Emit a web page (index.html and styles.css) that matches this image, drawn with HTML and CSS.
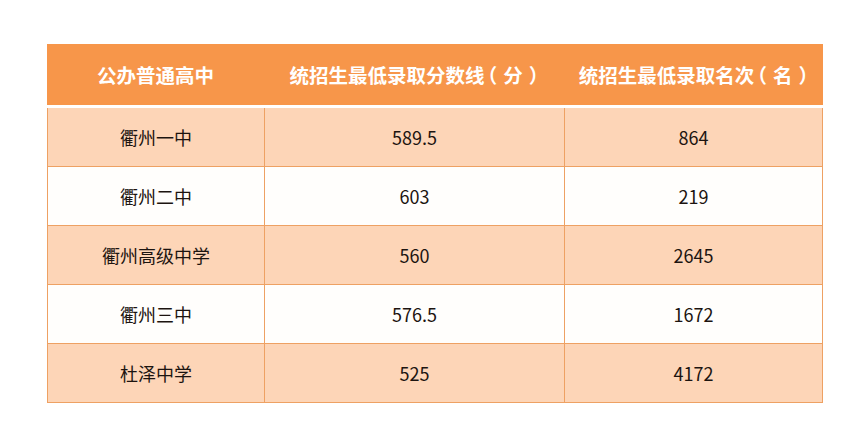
FILE: index.html
```html
<!DOCTYPE html>
<html lang="zh">
<head>
<meta charset="utf-8">
<link rel="stylesheet" href="styles.css">
</head>
<body>
<div class="page">
  <table class="scores">
    <colgroup>
      <col class="c1"><col class="c2"><col class="c3">
    </colgroup>
    <thead>
      <tr>
        <th>公办普通高中</th>
        <th>统招生最低录取分数线<span class="paren po">（</span><span class="pin">分</span><span class="paren pc">）</span></th>
        <th>统招生最低录取名次<span class="paren po">（</span><span class="pin">名</span><span class="paren pc">）</span></th>
      </tr>
    </thead>
    <tbody>
      <tr class="peach"><td>衢州一中</td><td>589.5</td><td>864</td></tr>
      <tr class="white"><td>衢州二中</td><td>603</td><td>219</td></tr>
      <tr class="peach"><td>衢州高级中学</td><td>560</td><td>2645</td></tr>
      <tr class="white"><td>衢州三中</td><td>576.5</td><td>1672</td></tr>
      <tr class="peach"><td>杜泽中学</td><td>525</td><td>4172</td></tr>
    </tbody>
  </table>
</div>
</body>
</html>
```

FILE: styles.css
```css
html, body {
  margin: 0;
  padding: 0;
  background: #ffffff;
}

.page {
  padding: 44px 0 0 47px;
  font-family: "Noto Sans CJK SC", "Noto Sans", sans-serif;
}

.scores {
  width: 776px;
  border-collapse: separate;
  border-spacing: 0;
  table-layout: fixed;
}

.c1 { width: 217px; }
.c2 { width: 300px; }
.c3 { width: 259px; }

.scores th {
  height: 61px;
  padding: 0;
  background: #f7964a;
  color: #ffffff;
  font-size: 19.5px;
  font-weight: 700;
  text-align: center;
  vertical-align: middle;
  border-bottom: 3px solid #ffffff;
  white-space: nowrap;
}

.paren { font-feature-settings: "halt" 1; }
.po { margin-left: 3px; }
.pin { margin: 0 6px; }
.pc { margin-right: 0; }

.scores td {
  height: 58px;
  padding: 0;
  font-size: 18px;
  color: #1c1410;
  text-align: center;
  vertical-align: middle;
  border-bottom: 1px solid #eea163;
  border-left: 1px solid #eea163;
}

.scores td:last-child {
  border-right: 1px solid #eea163;
}

.peach td { background: #fdd5b7; }
.white td { background: #fffefc; }
```
